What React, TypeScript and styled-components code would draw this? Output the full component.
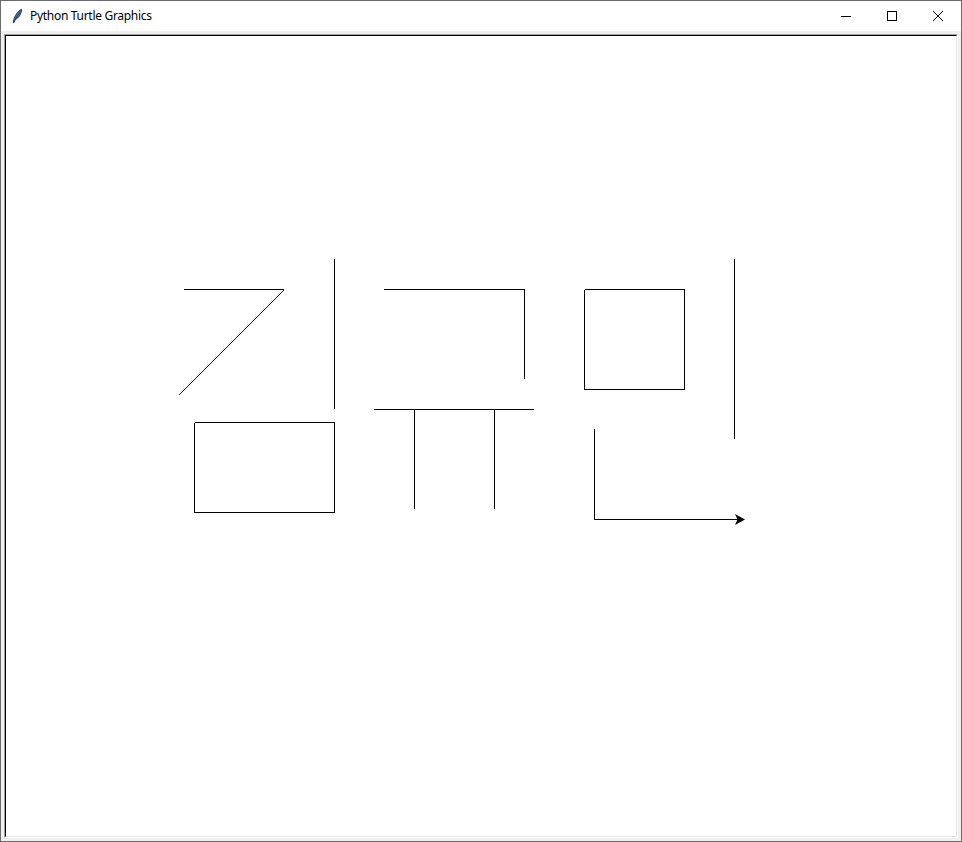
import React from "react";
import styled, { createGlobalStyle } from "styled-components";

const Global = createGlobalStyle`
  html, body { margin: 0; padding: 0; background: #ffffff; }
  body { width: 962px; height: 842px; overflow: hidden; }
`;

const Window = styled.div`
  box-sizing: border-box;
  width: 962px;
  height: 842px;
  border: 1px solid #6b6b6b;
  display: flex;
  flex-direction: column;
  background: #f0f0f0;
`;

const TitleBar = styled.div`
  height: 30px;
  flex: none;
  display: flex;
  align-items: center;
  background: #ffffff;
  font-family: "Noto Sans", "Open Sans", sans-serif;
  font-size: 12px;
  color: #000000;
`;

const AppIcon = styled.svg`
  width: 16px;
  height: 16px;
  margin-left: 8px;
  margin-right: 5px;
  flex: none;
`;

const Title = styled.span`
  flex: 1;
  letter-spacing: -0.3px;
  line-height: 16px;
  padding-bottom: 1px;
`;

const Controls = styled.div`
  display: flex;
  height: 100%;
`;

const ControlButton = styled.div`
  width: 46px;
  height: 100%;
  display: flex;
  align-items: center;
  justify-content: center;
  svg { display: block; }
`;

const Body = styled.div`
  flex: 1;
  padding: 3px;
  display: flex;
`;

const SunkenOuter = styled.div`
  flex: 1;
  display: flex;
  border: 1px solid;
  border-color: #a0a0a0 #ffffff #ffffff #a0a0a0;
`;

const SunkenInner = styled.div`
  flex: 1;
  display: flex;
  border: 1px solid;
  border-color: #000000 #e3e3e3 #e3e3e3 #000000;
  background: #ffffff;
`;

const Drawing = styled.svg`
  display: block;
  width: 950px;
  height: 800px;
`;

type Seg = [number, number, number, number];

const segments: Seg[] = [
  // 김 : ㄱ
  [184, 289.5, 284, 289.5],
  // | (vertical)
  [334.5, 259, 334.5, 409],
  // ㅁ
  [194.5, 422.5, 334.5, 422.5],
  [334.5, 422.5, 334.5, 512.5],
  [334.5, 512.5, 194.5, 512.5],
  [194.5, 512.5, 194.5, 422.5],
  // 규 : ㄱ
  [384, 289.5, 524.5, 289.5],
  [524.5, 289.5, 524.5, 379],
  // ㅠ
  [374, 409.5, 534, 409.5],
  [414.5, 409.5, 414.5, 509],
  [494.5, 409.5, 494.5, 509],
  // 민 : ㅁ
  [584.5, 289.5, 684.5, 289.5],
  [684.5, 289.5, 684.5, 389.5],
  [684.5, 389.5, 584.5, 389.5],
  [584.5, 389.5, 584.5, 289.5],
  // ㅣ
  [734.5, 259, 734.5, 439],
  // ㄴ
  [594.5, 429, 594.5, 519.5],
  [594.5, 519.5, 740, 519.5],
];

export default function App() {
  return (
    <>
      <Global />
      <Window>
        <TitleBar>
          <AppIcon viewBox="0 0 16 16">
            <path
              d="M12.6 1.2 C9.4 2.6 6.6 6.4 5.2 10.4 L4.2 14.6 L5 14.7 L6.2 11.6 C9.6 10.2 12.4 6 12.6 1.2 Z"
              fill="#4a78b8"
              stroke="#1b2a48"
              strokeWidth="0.9"
              strokeLinejoin="round"
            />
            <path d="M11.4 3.4 L5.6 12.2" stroke="#1b2a48" strokeWidth="0.7" />
          </AppIcon>
          <Title>Python Turtle Graphics</Title>
          <Controls>
            <ControlButton>
              <svg width="10" height="10" viewBox="0 0 10 10">
                <path d="M0 5.5 H10" stroke="#000" strokeWidth="1" shapeRendering="crispEdges" />
              </svg>
            </ControlButton>
            <ControlButton>
              <svg width="10" height="10" viewBox="0 0 10 10">
                <rect x="0.5" y="0.5" width="9" height="9" fill="none" stroke="#000" strokeWidth="1" shapeRendering="crispEdges" />
              </svg>
            </ControlButton>
            <ControlButton>
              <svg width="10" height="10" viewBox="0 0 10 10">
                <path d="M0 0 L10 10 M10 0 L0 10" stroke="#000" strokeWidth="1" />
              </svg>
            </ControlButton>
          </Controls>
        </TitleBar>
        <Body>
          <SunkenOuter>
            <SunkenInner>
              <Drawing viewBox="6 36 950 800">
                <g stroke="#000" strokeWidth="1" fill="none" shapeRendering="crispEdges">
                  {segments.map(([x1, y1, x2, y2], i) => (
                    <line key={i} x1={x1} y1={y1} x2={x2} y2={y2} />
                  ))}
                </g>
                <line x1="284" y1="290" x2="179" y2="395" stroke="#000" strokeWidth="0.9" />
                <polygon points="745,519.5 735,514 737.5,519.5 735,525" fill="#000" />
              </Drawing>
            </SunkenInner>
          </SunkenOuter>
        </Body>
      </Window>
    </>
  );
}
